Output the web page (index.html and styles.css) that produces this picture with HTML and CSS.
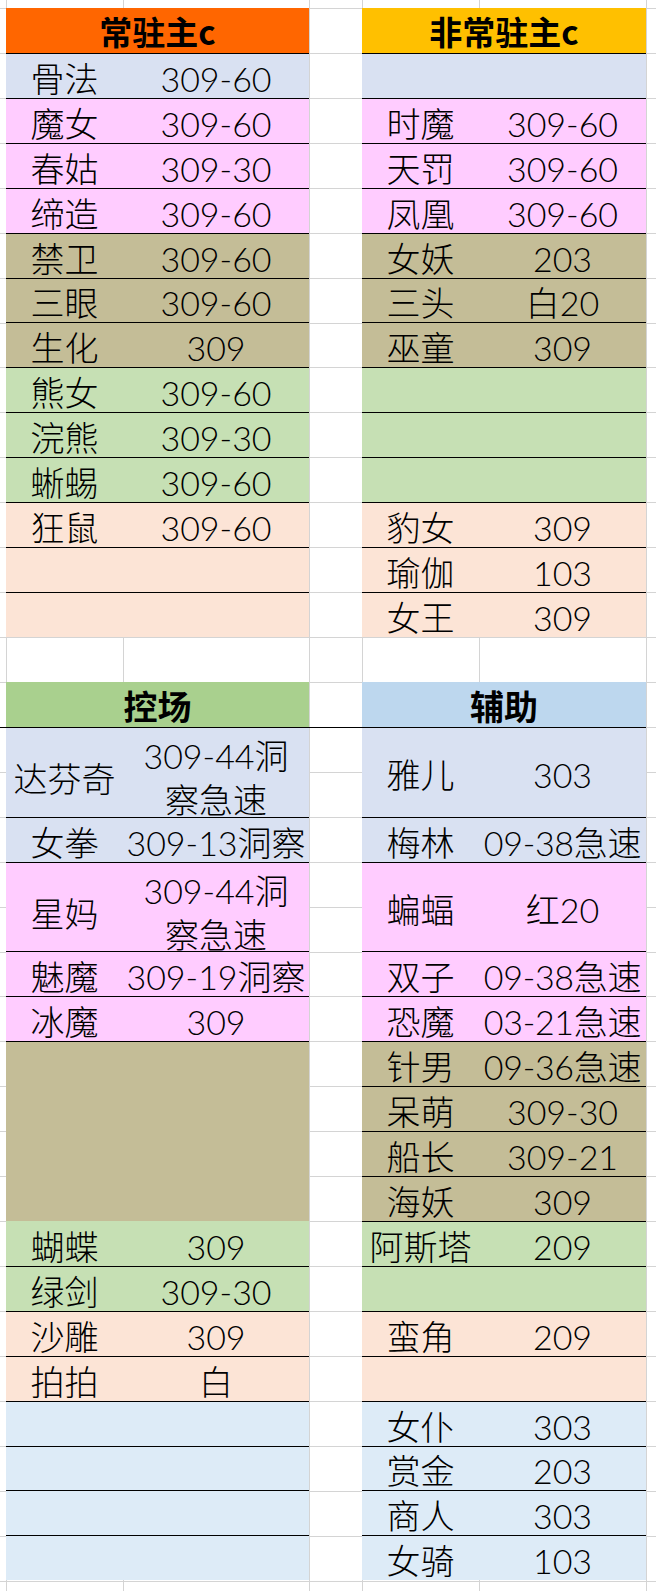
FILE: index.html
```html
<!DOCTYPE html>
<html lang="zh-CN">
<head>
<meta charset="utf-8">
<title>阵容表</title>
<link rel="stylesheet" href="styles.css">
</head>
<body>
<div class="sheet">
  <section class="band">
    <div class="tbl tbl-left">
      <div class="hd hd-orange">常驻主c</div>
      <div class="row c-slate"><span>骨法</span><span>309-60</span></div>
      <div class="row c-pink"><span>魔女</span><span>309-60</span></div>
      <div class="row c-pink"><span>春姑</span><span>309-30</span></div>
      <div class="row c-pink"><span>缔造</span><span>309-60</span></div>
      <div class="row c-tan"><span>禁卫</span><span>309-60</span></div>
      <div class="row c-tan"><span>三眼</span><span>309-60</span></div>
      <div class="row c-tan"><span>生化</span><span>309</span></div>
      <div class="row c-green"><span>熊女</span><span>309-60</span></div>
      <div class="row c-green"><span>浣熊</span><span>309-30</span></div>
      <div class="row c-green"><span>蜥蜴</span><span>309-60</span></div>
      <div class="row c-peach"><span>狂鼠</span><span>309-60</span></div>
      <div class="row c-peach"><span></span><span></span></div>
      <div class="row c-peach"><span></span><span></span></div>
    </div>
    <div class="tbl tbl-right">
      <div class="hd hd-yellow">非常驻主c</div>
      <div class="row c-slate"><span></span><span></span></div>
      <div class="row c-pink"><span>时魔</span><span>309-60</span></div>
      <div class="row c-pink"><span>天罚</span><span>309-60</span></div>
      <div class="row c-pink"><span>凤凰</span><span>309-60</span></div>
      <div class="row c-tan"><span>女妖</span><span>203</span></div>
      <div class="row c-tan"><span>三头</span><span>白20</span></div>
      <div class="row c-tan"><span>巫童</span><span>309</span></div>
      <div class="row c-green"><span></span><span></span></div>
      <div class="row c-green"><span></span><span></span></div>
      <div class="row c-green"><span></span><span></span></div>
      <div class="row c-peach"><span>豹女</span><span>309</span></div>
      <div class="row c-peach"><span>瑜伽</span><span>103</span></div>
      <div class="row c-peach"><span>女王</span><span>309</span></div>
    </div>
  </section>

  <div class="blank"></div>

  <section class="band band-bottom">
    <div class="tbl tbl-left">
      <div class="hd hd-green hd-lg">控场</div>
      <div class="row tall c-slate"><span>达芬奇</span><span class="wrap">309-44洞<br>察急速</span></div>
      <div class="row c-slate"><span>女拳</span><span>309-13洞察</span></div>
      <div class="row tall c-pink"><span>星妈</span><span class="wrap">309-44洞<br>察急速</span></div>
      <div class="row c-pink"><span>魅魔</span><span>309-19洞察</span></div>
      <div class="row c-pink"><span>冰魔</span><span>309</span></div>
      <div class="row c-tan"><span></span><span></span></div>
      <div class="row c-tan open"><span></span><span></span></div>
      <div class="row c-tan open"><span></span><span></span></div>
      <div class="row c-tan open"><span></span><span></span></div>
      <div class="row c-green open"><span>蝴蝶</span><span>309</span></div>
      <div class="row c-green"><span>绿剑</span><span>309-30</span></div>
      <div class="row c-peach"><span>沙雕</span><span>309</span></div>
      <div class="row c-peach"><span>拍拍</span><span>白</span></div>
      <div class="row c-sky"><span></span><span></span></div>
      <div class="row c-sky"><span></span><span></span></div>
      <div class="row c-sky"><span></span><span></span></div>
      <div class="row c-sky"><span></span><span></span></div>
    </div>
    <div class="tbl tbl-right">
      <div class="hd hd-blue hd-lg">辅助</div>
      <div class="row tall c-slate"><span>雅儿</span><span>303</span></div>
      <div class="row c-slate"><span>梅林</span><span class="tight">09-38急速</span></div>
      <div class="row tall c-pink"><span>蝙蝠</span><span>红20</span></div>
      <div class="row c-pink"><span>双子</span><span class="tight">09-38急速</span></div>
      <div class="row c-pink"><span>恐魔</span><span class="tight">03-21急速</span></div>
      <div class="row c-tan"><span>针男</span><span class="tight">09-36急速</span></div>
      <div class="row c-tan"><span>呆萌</span><span>309-30</span></div>
      <div class="row c-tan"><span>船长</span><span>309-21</span></div>
      <div class="row c-tan"><span>海妖</span><span>309</span></div>
      <div class="row c-green"><span>阿斯塔</span><span>209</span></div>
      <div class="row c-green"><span></span><span></span></div>
      <div class="row c-peach"><span>蛮角</span><span>209</span></div>
      <div class="row c-peach"><span></span><span></span></div>
      <div class="row c-sky"><span>女仆</span><span>303</span></div>
      <div class="row c-sky"><span>赏金</span><span>203</span></div>
      <div class="row c-sky"><span>商人</span><span>303</span></div>
      <div class="row c-sky"><span>女骑</span><span>103</span></div>
    </div>
  </section>
</div>
</body>
</html>
```

FILE: styles.css
```css
* {
  box-sizing: border-box;
  margin: 0;
  padding: 0;
}

html, body {
  margin: 0;
  background: #ffffff;
}

body {
  font-family: Lato, "Noto Sans CJK SC", sans-serif;
  color: #000000;
}

.sheet {
  width: 656px;
  height: 1591px;
  padding-top: 8px;
  overflow: hidden;
  background-color: #ffffff;
  background-image:
    linear-gradient(to right,
      transparent 0 6px, #d4d4d4 6px 7px,
      transparent 7px 123px, #d4d4d4 123px 124px,
      transparent 124px 309px, #d4d4d4 309px 310px,
      transparent 310px 362px, #d4d4d4 362px 363px,
      transparent 363px 479px, #d4d4d4 479px 480px,
      transparent 480px 646px, #d4d4d4 646px 647px,
      transparent 647px),
    repeating-linear-gradient(to bottom, #d4d4d4 0 1px, transparent 1px 44.93px);
  background-repeat: no-repeat, no-repeat;
  background-position: 0 0, 0 8px;
  background-size: 100% 100%, 100% 1583px;
}

.band {
  display: grid;
  grid-template-columns: 303px 284px;
  column-gap: 53px;
  padding-left: 6px;
  width: 646px;
}

.band-bottom {
  background-image: linear-gradient(#000000, #000000);
  background-repeat: no-repeat;
  background-position: 0 44.93px;
  background-size: 100% 1px;
}

.blank {
  height: 44.93px;
}

.tbl {
  display: flex;
  flex-direction: column;
}

.hd {
  height: 44.93px;
  display: flex;
  align-items: center;
  justify-content: center;
  padding-top: 3px;
  font-family: "Noto Sans CJK SC", sans-serif;
  font-weight: 700;
  font-size: 33px;
  line-height: 1;
}

.hd-lg {
  font-size: 34px;
}

.hd-orange { background: #ff6600; }
.hd-yellow { background: #ffc000; }
.hd-green { background: #a9d08e; }
.hd-blue { background: #bdd7ee; }

.row {
  height: 44.93px;
  display: grid;
  grid-template-columns: 117px 1fr;
  align-items: center;
  text-align: center;
  border-top: 1px solid #000000;
  padding-top: 6px;
  font-size: 34px;
  font-weight: 300;
  line-height: 1;
  white-space: nowrap;
}

.row.tall {
  height: 89.86px;
}

.row.open {
  border-top-color: transparent;
}

.row .wrap {
  line-height: 44px;
  white-space: normal;
  padding-bottom: 2px;
}

.row .tight {
  letter-spacing: -0.3px;
}

.c-slate { background-color: #d9e1f2; }
.c-pink { background-color: #ffccff; }
.c-tan { background-color: #c4bd97; }
.c-green { background-color: #c6e0b4; }
.c-peach { background-color: #fce4d6; }
.c-sky { background-color: #ddebf7; }
```
